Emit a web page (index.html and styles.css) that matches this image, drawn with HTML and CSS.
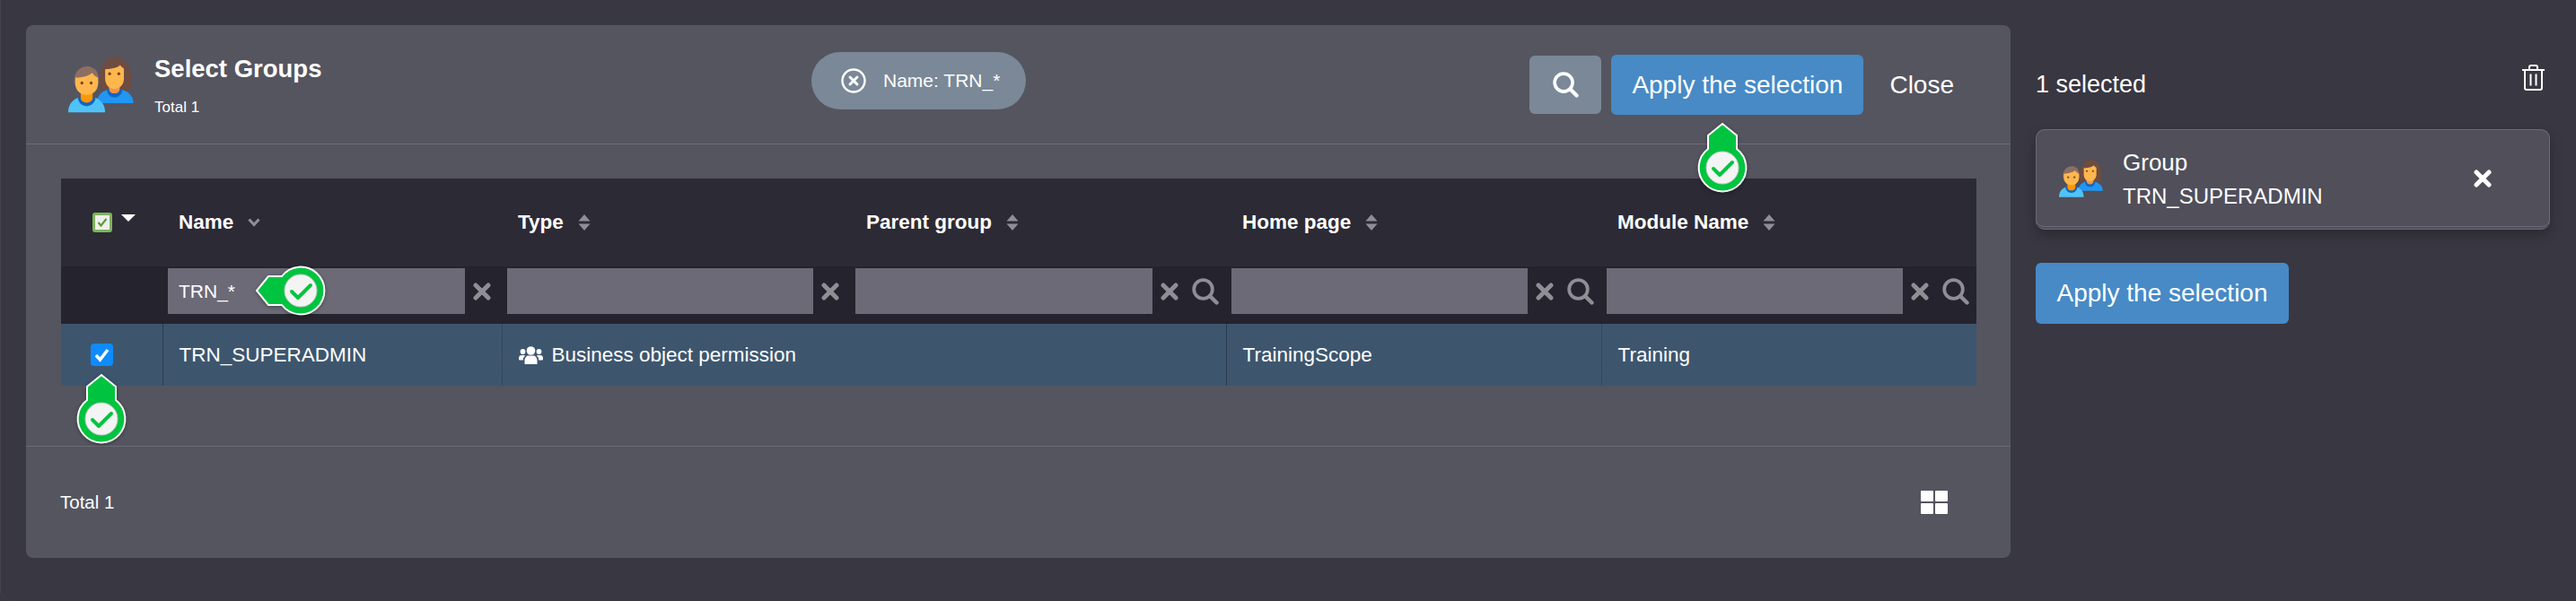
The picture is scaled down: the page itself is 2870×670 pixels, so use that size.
FILE: index.html
```html
<!DOCTYPE html>
<html lang="en">
<head>
    <meta charset="UTF-8">
    <meta name="viewport" content="width=device-width, initial-scale=1.0">
    <title>Select Groups</title>
    <link rel="stylesheet" href="styles.css">
</head>
<body>
    <svg class="defs" aria-hidden="true">
        <symbol id="people" viewBox="78 70 220 188">
            <path fill="#6d4c41" d="M180 150c0-45 25-80 56-80 32 0 55 32 55 78 0 14-4 28-12 36h-84c-10-8-15-20-15-34z"/>
            <path fill="#f0954a" d="M215 160h36v32c0 10-8 18-18 18s-18-8-18-18z"/>
            <path fill="#ffb74d" d="M202 112c14 0 42-4 50-14 4 6 10 10 13 12v34c0 20-14 34-32 34s-31-14-31-34z"/>
            <path fill="#2196f3" d="M174 226c0-24 16-40 38-46 2 14 10 22 22 22s20-8 22-22c24 6 41 22 41 46z"/>
            <path fill="#1565c0" d="M208 181l7-3c2 10 8 15 18 15s17-5 19-15l8 3c-2 14-12 25-27 25s-23-11-25-25z"/>
            <path fill="#8d6e63" d="M98 158c-2-34 16-56 44-56 10 0 14 2 18 6 12 2 21 16 21 50l-8 14H104z"/>
            <path fill="#ff9800" d="M120 180h40v34c0 10-9 18-20 18s-20-8-20-18z"/>
            <path fill="#ffb74d" d="M102 140c22 0 46-6 56-16 6 8 14 14 20 16v20c0 22-16 38-38 38s-38-16-38-38z"/>
            <circle fill="#784719" cx="124" cy="158" r="5"/>
            <circle fill="#784719" cx="155" cy="158" r="5"/>
            <circle fill="#784719" cx="217" cy="127" r="5"/>
            <circle fill="#784719" cx="248" cy="127" r="5"/>
            <path fill="#4fc3f7" d="M78 257c0-26 14-42 34-50 2 14 14 24 28 24s26-10 28-24c20 8 34 24 34 50z"/>
            <path fill="#1565c0" d="M110 208l8-3c2 12 10 19 22 19s20-7 22-19l8 3c-2 16-14 28-30 28s-28-12-30-28z"/>
        </symbol>
        <symbol id="search" viewBox="0 0 30 30">
            <circle cx="12.5" cy="12.5" r="10.300" fill="none" stroke="currentColor" stroke-width="3.800"/>
            <path d="M20 20l7.500 7.500" stroke="currentColor" stroke-width="4.400" stroke-linecap="round"/>
        </symbol>
        <symbol id="cross" viewBox="0 0 20 20">
            <path d="M3 3l14 14M17 3L3 17" stroke="currentColor" stroke-width="5" stroke-linecap="round"/>
        </symbol>
        <symbol id="sort" viewBox="0 0 14 18">
            <path fill="currentColor" d="M7 0l6.5 7.5H.5zM7 18L.5 10.500h13z"/>
        </symbol>
        <symbol id="pin" viewBox="-30 -52 60 84">
            <path fill="#00c43f" stroke="#fff" stroke-width="2" d="M0-49l16 13v15a26.400 26.400 0 1 1-32 0v-15z"/>
        </symbol>
        <symbol id="pin-check" viewBox="-30 -52 60 84">
            <circle r="18" fill="#f4f4f4" stroke="#c9c9c9"/>
            <path d="M-10 1l7 7L11-6" fill="none" stroke="#00c43f" stroke-width="4" stroke-linecap="round" stroke-linejoin="round"/>
        </symbol>
    </svg>

    <div class="screen">
        <div class="dialog">
            <div class="dialog-head">
                <div class="title-block">
                    <svg class="people-big"><use href="#people"/></svg>
                    <div>
                        <h1>Select Groups</h1>
                        <p class="total-small">Total 1</p>
                    </div>
                </div>
                <div class="chip">
                    <svg class="chip-x" viewBox="0 0 28 28">
                        <circle cx="14" cy="14" r="12.500" fill="none" stroke="#fff" stroke-width="2.400"/>
                        <path d="M10 10l8 8M18 10l-8 8" stroke="#fff" stroke-width="3" stroke-linecap="round"/>
                    </svg>
                    <span>Name: TRN_*</span>
                </div>
                <div class="actions">
                    <button class="btn-search"><svg class="ico-search-white"><use href="#search"/></svg></button>
                    <button class="btn-apply">Apply the selection</button>
                    <button class="btn-close">Close</button>
                </div>
            </div>

            <div class="dialog-body">
                <table class="grid">
                    <colgroup>
                        <col class="c-check"><col class="c-name"><col class="c-type"><col class="c-parent"><col class="c-home"><col class="c-module">
                    </colgroup>
                    <thead>
                        <tr class="head-row">
                            <th>
                                <div class="check-head">
                                    <span class="mini-check"><svg viewBox="0 0 16 16"><path d="M3.500 8l3 3.500L12.500 4" fill="none" stroke="#5c9a3c" stroke-width="2.200"/></svg></span>
                                    <span class="caret"></span>
                                </div>
                            </th>
                            <th><div class="label">Name <svg class="chev" viewBox="0 0 14 10"><path d="M1.500 1.500L7 7.500l5.500-6" fill="none" stroke="currentColor" stroke-width="3.200"/></svg></div></th>
                            <th><div class="label">Type <svg class="sort"><use href="#sort"/></svg></div></th>
                            <th><div class="label">Parent group <svg class="sort"><use href="#sort"/></svg></div></th>
                            <th><div class="label">Home page <svg class="sort"><use href="#sort"/></svg></div></th>
                            <th><div class="label">Module Name <svg class="sort"><use href="#sort"/></svg></div></th>
                        </tr>
                        <tr class="filter-row">
                            <td></td>
                            <td><div class="filter"><input type="text" value="TRN_*"><svg class="f-x"><use href="#cross"/></svg></div></td>
                            <td><div class="filter"><input type="text"><svg class="f-x"><use href="#cross"/></svg></div></td>
                            <td><div class="filter"><input type="text"><svg class="f-x"><use href="#cross"/></svg><svg class="f-s"><use href="#search"/></svg></div></td>
                            <td><div class="filter"><input type="text"><svg class="f-x"><use href="#cross"/></svg><svg class="f-s"><use href="#search"/></svg></div></td>
                            <td><div class="filter"><input type="text"><svg class="f-x"><use href="#cross"/></svg><svg class="f-s"><use href="#search"/></svg></div></td>
                        </tr>
                    </thead>
                    <tbody>
                        <tr class="data-row">
                            <td class="cell-check"><span class="row-check"><svg viewBox="0 0 25 25"><path d="M6 13l4.500 5L19 7" fill="none" stroke="#fff" stroke-width="3.600"/></svg></span></td>
                            <td class="line-solid">TRN_SUPERADMIN</td>
                            <td class="line-dotted">
                                <div class="type-cell">
                                    <svg class="users" viewBox="0 0 27 20">
                                        <circle cx="13.500" cy="5" r="4.800"/>
                                        <circle cx="4.500" cy="6" r="2.900"/>
                                        <circle cx="22.500" cy="6" r="2.900"/>
                                        <path d="M6.500 20v-4c0-3.500 2.500-5.500 4-5.500h6c1.500 0 4 2 4 5.500v4zM0 14c0-3 1-4 3-4h2.500c.8 0 1.300.3 1.700.8C5.400 12 4.700 13.500 4.700 15.500H1c-.6 0-1-.6-1-1.500zM27 14c0-3-1-4-3-4h-2.500c-.8 0-1.300.3-1.700.8 1.800 1.200 2.500 2.700 2.500 4.700H26c.6 0 1-.6 1-1.500z"/>
                                    </svg>
                                    Business object permission
                                </div>
                            </td>
                            <td></td>
                            <td class="line-solid">TrainingScope</td>
                            <td class="line-dotted">Training</td>
                        </tr>
                    </tbody>
                </table>
            </div>

            <div class="dialog-foot">
                <span>Total 1</span>
                <div class="tiles"><i></i><i></i><i></i><i></i></div>
            </div>

            <!-- green check pins over the controls -->
            <svg class="pin pin-apply"><use href="#pin"/><use href="#pin-check"/></svg>
            <svg class="pin pin-filter" viewBox="-30 -52 60 84"><g transform="rotate(-90)"><path fill="#00c43f" stroke="#fff" stroke-width="2" d="M0-49l16 13v15a26.400 26.400 0 1 1-32 0v-15z"/></g><use href="#pin-check" x="-30" y="-52" width="60" height="84"/></svg>
            <svg class="pin pin-row"><use href="#pin"/><use href="#pin-check"/></svg>
        </div>

        <aside class="side">
            <div class="side-head">
                <span class="side-count">1 selected</span>
                <svg class="trash" viewBox="0 0 25 29" fill="none" stroke="#fff" stroke-width="2">
                    <path d="M0 6h25M8 6V2.500C8 1.500 9 1 10 1h5c1 0 2 .5 2 1.500V6M3 6v20c0 1.200.8 2 2 2h15c1.200 0 2-.8 2-2V6M9.500 10.500v13M15.500 10.500v13"/>
                </svg>
            </div>
            <div class="pick-card">
                <svg class="people-small"><use href="#people"/></svg>
                <div class="pick-text">
                    <div class="pick-kind">Group</div>
                    <div>TRN_SUPERADMIN</div>
                </div>
                <svg class="pick-x"><use href="#cross"/></svg>
            </div>
            <button class="btn-apply side-apply">Apply the selection</button>
        </aside>
    </div>
</body>
</html>
```

FILE: styles.css
```css
*{
    margin:0px;
    padding:0px;
    box-sizing:border-box;
}
body{
    background-color:#393741;
    font-family:"Liberation Sans",Arial,sans-serif;
    color:#fff;
    overflow:hidden;
}
button{
    font-family:inherit;
    color:#fff;
    border:none;
}
.defs{
    position:absolute;
    width:0;
    height:0;
}
.screen{
    display:flex;
    align-items:flex-start;
    width:2870px;
    height:670px;
    padding:28px 0 0 28px;
    border-left:1px solid #46454f;
    border-bottom-left-radius:14px;
}
.dialog{
    position:relative;
    flex:none;
    display:flex;
    flex-direction:column;
    width:2211px;
    height:594px;
    background-color:#555560;
    border-radius:8px;
}
.dialog-head{
    display:flex;
    align-items:flex-start;
    height:133px;
    padding:30px 63px 0 47px;
    border-bottom:1px solid #6d6d77;
}
.title-block{
    display:flex;
    width:828px;
}
.people-big{
    width:73px;
    height:63px;
    margin:5px 23px 0 0;
}
h1{
    font-size:27.500px;
    line-height:30px;
    margin-top:4px;
}
.total-small{
    font-size:17px;
    line-height:20px;
    margin-top:18px;
}
.chip{
    display:flex;
    align-items:center;
    gap:19px;
    width:239px;
    height:64px;
    padding-left:33px;
    border-radius:32px;
    background-color:#7a8897;
    font-size:21px;
}
.chip-x{
    width:28px;
    height:28px;
}
.actions{
    display:flex;
    align-items:center;
    margin-left:auto;
    margin-top:3px;
}
.btn-search{
    display:flex;
    align-items:center;
    justify-content:center;
    width:80px;
    height:65px;
    border-radius:6px;
    background-color:#7a8897;
}
.ico-search-white{
    width:29px;
    height:29px;
}
.btn-apply{
    width:281px;
    height:67px;
    margin-left:11px;
    border-radius:6px;
    background-color:#478ac6;
    font-size:28px;
}
.btn-close{
    margin-left:29px;
    background:none;
    font-size:28px;
}
.dialog-body{
    flex:1;
    padding:38px 38px 0 39px;
}
.grid{
    table-layout:fixed;
    width:2134px;
    border-collapse:collapse;
}
.c-check{width:113px;}
.c-name{width:378px;}
.c-type{width:388px;}
.c-parent{width:419px;}
.c-home{width:418px;}
.c-module{width:418px;}
.head-row{
    height:98px;
    background-color:#2c2a35;
}
.label{
    display:flex;
    align-items:center;
    gap:16px;
    padding-left:18px;
    font-size:22.500px;
    text-align:left;
}
.check-head{
    display:flex;
    align-items:flex-start;
    padding-left:35px;
}
.mini-check{
    display:flex;
    width:22px;
    height:22px;
    border:3px solid #7cb45c;
    border-radius:3px;
    background-color:#eef0ea;
}
.caret{
    margin:2px 0 0 10px;
    border-left:8px solid transparent;
    border-right:8px solid transparent;
    border-top:8px solid #fff;
}
.chev{
    width:14px;
    height:10px;
    color:#8f8e95;
}
.sort{
    width:14px;
    height:18px;
    color:#8f8e95;
}
.filter-row{
    height:64px;
    background-color:#25232d;
}
.filter-row td{
    vertical-align:top;
    padding-top:2px;
}
.filter{
    display:flex;
    align-items:flex-start;
    padding-left:6px;
}
.filter input{
    flex:1;
    min-width:0;
    height:51px;
    padding-left:12px;
    border:none;
    background-color:#6b6a76;
    color:#fff;
    font-family:inherit;
    font-size:21px;
}
.f-x{
    flex:none;
    width:20px;
    height:20px;
    margin:16px 12px 0 9px;
    color:#8f8e95;
}
.f-s{
    flex:none;
    width:30px;
    height:30px;
    margin:11px 8px 0 3px;
    color:#8f8e95;
}
.data-row{
    height:69px;
    background-color:#3d566e;
    font-size:22.500px;
}
.data-row td{
    padding-left:18px;
}
.data-row .cell-check{
    padding-left:33px;
}
.line-solid{
    border-left:1px solid #2c3a4a;
}
.line-dotted{
    border-left:1px dotted #2c3a4a;
}
.row-check{
    display:flex;
    width:25px;
    height:25px;
    border-radius:4px;
    background-color:#0d8bff;
}
.type-cell{
    display:flex;
    align-items:center;
    gap:10px;
}
.users{
    width:27px;
    height:20px;
    fill:#fff;
}
.dialog-foot{
    display:flex;
    align-items:center;
    justify-content:space-between;
    height:125px;
    padding:0 70px 0 38px;
    border-top:1px solid #6d6d77;
    font-size:20.500px;
}
.tiles{
    display:grid;
    grid-template-columns:14px 14px;
    grid-template-rows:12px 12px;
    gap:2px;
}
.tiles i{
    background-color:#fff;
    border-radius:1px;
}
.pin{
    position:absolute;
    width:60px;
    height:84px;
    overflow:visible;
    filter:drop-shadow(0 1px 2px rgba(0,0,0,.35));
}
.pin-apply{left:1860px;top:107px;}
.pin-filter{left:276px;top:244px;}
.pin-row{left:54px;top:387px;}
.side{
    flex:none;
    width:573px;
    margin-left:28px;
}
.side-head{
    display:flex;
    justify-content:space-between;
    align-items:flex-start;
    height:116px;
    padding:44px 6px 0 0;
    font-size:27px;
}
.side-count{
    margin-top:7px;
}
.trash{
    width:25px;
    height:29px;
}
.pick-card{
    display:flex;
    align-items:center;
    height:112px;
    padding-left:25px;
    border:1px solid #6b6a76;
    border-bottom:4px double #6b6a76;
    border-radius:10px;
    background-color:#504f5a;
    box-shadow:0 6px 14px rgba(0,0,0,.25);
}
.people-small{
    width:49px;
    height:42px;
}
.pick-text{
    flex:1;
    margin:3px 0 0 22px;
    font-size:24px;
    line-height:38px;
}
.pick-kind{
    font-size:26px;
}
.pick-x{
    width:20px;
    height:20px;
    margin-right:64px;
}
.side-apply{
    display:block;
    width:282px;
    height:68px;
    margin:37px 0 0 0;
}
```
